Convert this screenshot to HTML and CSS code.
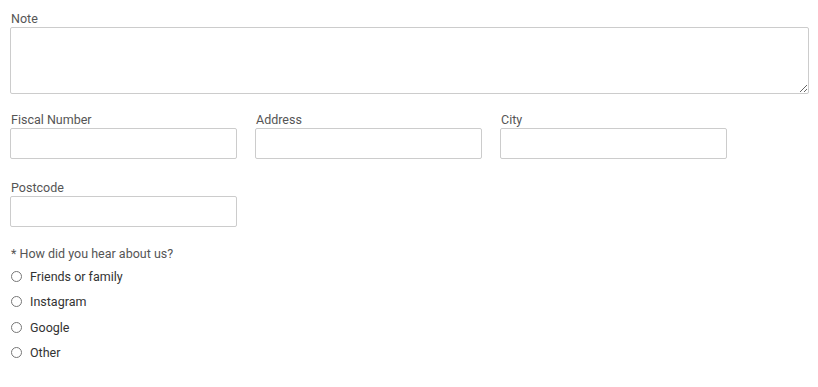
FILE: index.html
```html
<!DOCTYPE html>
<html lang="en">
<head>
  <meta charset="UTF-8">
  <title>Form</title>
  <link rel="stylesheet" href="styles.css">
</head>
<body>
  <form class="form">
    <div class="field">
      <label class="label" for="note">Note</label>
      <textarea id="note" class="note"></textarea>
    </div>
    <div class="row">
      <div class="field">
        <label class="label" for="fiscal">Fiscal Number</label>
        <input id="fiscal" class="input" type="text">
      </div>
      <div class="field">
        <label class="label" for="address">Address</label>
        <input id="address" class="input" type="text">
      </div>
      <div class="field">
        <label class="label" for="city">City</label>
        <input id="city" class="input" type="text">
      </div>
      <div class="field">
        <label class="label" for="postcode">Postcode</label>
        <input id="postcode" class="input" type="text">
      </div>
    </div>
    <div class="field">
      <div class="label question">* How did you hear about us?</div>
      <div class="options">
        <label class="option"><input type="radio" name="source"> Friends or family</label>
        <label class="option"><input type="radio" name="source"> Instagram</label>
        <label class="option"><input type="radio" name="source"> Google</label>
        <label class="option"><input type="radio" name="source"> Other</label>
      </div>
    </div>
  </form>
</body>
</html>
```

FILE: styles.css
```css
body {
  margin: 0;
  font-family: Roboto, "Liberation Sans", Arial, sans-serif;
  font-size: 12.5px;
  background: #fff;
}
.form {
  padding: 10px 10px 0 10px;
  display: flex;
  flex-direction: column;
  gap: 17px;
}
.field {
  display: flex;
  flex-direction: column;
}
.label {
  color: #555;
  line-height: 17px;
  padding-left: 1px;
}
.question {
  margin-top: 1px;
}
.note {
  width: 799px;
  height: 67px;
  box-sizing: border-box;
  border: 1px solid #ccc;
  border-radius: 2px;
  margin: 0;
}
.row {
  display: grid;
  grid-template-columns: repeat(3, 227px);
  column-gap: 18px;
  row-gap: 20px;
}
.input {
  height: 31px;
  width: 227px;
  box-sizing: border-box;
  border: 1px solid #ccc;
  border-radius: 2px;
  margin: 0;
}
.options {
  display: flex;
  flex-direction: column;
  padding-top: 2px;
}
.option {
  display: flex;
  align-items: center;
  gap: 8px;
  height: 25.3px;
  color: #333;
}
.option input {
  margin: 0 0 0 1px;
  width: 11px;
  height: 11px;
}
```
